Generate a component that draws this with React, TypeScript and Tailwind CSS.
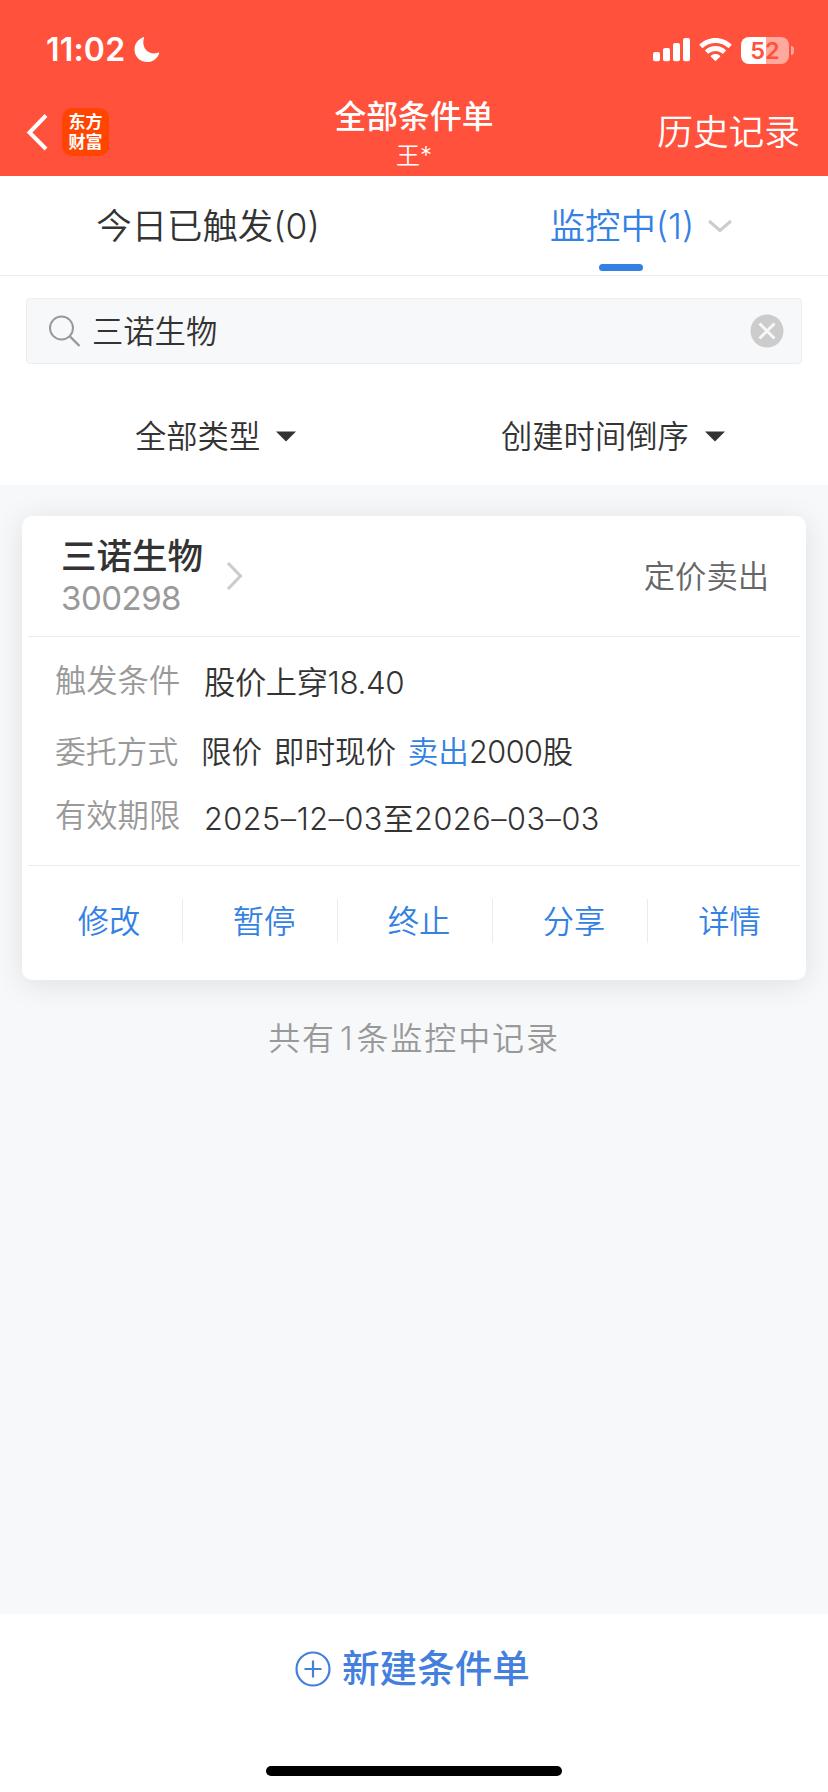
import { useState } from 'react'
import type { ReactNode } from 'react'

interface OrderRow {
  label: string
  value: ReactNode
  labelClass: string
  valueClass: string
}

const rows: OrderRow[] = [
  {
    label: '触发条件',
    value: '股价上穿18.40',
    labelClass: 'w-[149px] text-[31.3px] pb-[5px]',
    valueClass: 'text-[31.3px] tracking-[-0.4px]',
  },
  {
    label: '委托方式',
    value: (
      <>
        限价 即时现价 <span className="text-[#3381e3]">卖出</span>
        <span className="tracking-[-0.5px]">2000</span>股
      </>
    ),
    labelClass: 'w-[146px] text-[30.8px] pt-[1px]',
    valueClass: 'text-[30.6px] [word-spacing:3px] pt-[1px]',
  },
  {
    label: '有效期限',
    value: '2025–12–03至2026–03–03',
    labelClass: 'w-[149px] text-[31.3px] pb-[6px]',
    valueClass: 'text-[30.6px] tracking-[0.55px]',
  },
]

const actions = ['修改', '暂停', '终止', '分享', '详情']

function StatusBar() {
  return (
    <div className="flex h-[88px] items-center justify-between pl-[46px] pr-[34px] pt-[12px]">
      <div className="flex items-center gap-[9px]">
        <span className="text-[32px] leading-[38px] font-semibold tracking-[0.2px]">11:02</span>
        <svg width="26" height="26" viewBox="0 0 26 26" fill="currentColor">
          <path d="M10.2 0.6C9.6 2 9.3 3.6 9.3 5.3C9.3 11.8 13.7 16.4 20.2 16.4C22 16.4 23.6 16.1 24.6 15.6C25 15.4 25.4 15.7 25.2 16.2C23.6 21.5 18.8 25 13 25C6 25 0.5 19.6 0.5 12.5C0.5 7 4 2.2 9.3 0.2C9.9 0 10.4 0.2 10.2 0.6Z" />
        </svg>
      </div>
      <div className="flex items-center">
        <svg width="37" height="24" viewBox="0 0 37 24" fill="currentColor">
          <rect x="0" y="14" width="7" height="9.3" rx="2" />
          <rect x="10" y="10" width="7" height="13.3" rx="2" />
          <rect x="20" y="5" width="7" height="18.3" rx="2" />
          <rect x="30" y="0" width="7" height="23.3" rx="2" />
        </svg>
        <svg className="ml-[9px]" width="33" height="24" viewBox="0 0 33 24" fill="currentColor">
          <path d="M16.5 0C22.6 0 28.2 2.4 32.4 6.3C32.7 6.6 32.7 7 32.4 7.3L30 9.7C29.7 10 29.3 10 29 9.7C25.7 6.6 21.3 4.9 16.5 4.9C11.7 4.9 7.3 6.6 4 9.7C3.7 10 3.3 10 3 9.7L0.6 7.3C0.3 7 0.3 6.6 0.6 6.3C4.8 2.4 10.4 0 16.5 0Z" />
          <path d="M16.5 8.1C20.4 8.1 24 9.6 26.7 12.1C27 12.4 27 12.8 26.7 13.1L24.2 15.5C23.9 15.8 23.6 15.8 23.3 15.5C21.5 13.9 19.1 12.9 16.5 12.9C13.9 12.9 11.5 13.9 9.7 15.5C9.4 15.8 9.1 15.8 8.8 15.5L6.3 13.1C6 12.8 6 12.4 6.3 12.1C9 9.6 12.6 8.1 16.5 8.1Z" />
          <path d="M16.5 16.1C18.3 16.1 19.9 16.7 21.1 17.8C21.4 18.1 21.4 18.4 21.1 18.7L17 22.8C16.7 23.1 16.3 23.1 16 22.8L11.9 18.7C11.6 18.4 11.6 18.1 11.9 17.8C13.1 16.7 14.7 16.1 16.5 16.1Z" />
        </svg>
        <div className="ml-[9px] flex h-[27px] w-[48px] items-center justify-center rounded-[8px] bg-linear-to-r from-white from-52% to-[#ffa89d] to-52% text-[23.5px] leading-[27px] font-semibold text-[#ff513b]">
          52
        </div>
        <div className="ml-[2px] h-[9px] w-[3px] rounded-r-full bg-[#ffa89d]" />
      </div>
    </div>
  )
}

function Header() {
  return (
    <div className="grid h-[88px] grid-cols-[1fr_auto_1fr] items-start">
      <div className="flex items-center pt-[20px] pl-[25px]">
        <svg width="23" height="38" viewBox="0 0 23 38" fill="none" stroke="currentColor" strokeWidth="4">
          <path d="M21 2.5L4.5 19.5L21 36" />
        </svg>
        <div className="ml-[14px] flex h-[48px] w-[47px] flex-col items-center justify-center rounded-[10px] bg-[#ff4500] pb-[1px] text-[17px] leading-[20px] font-bold">
          <span>东方</span>
          <span>财富</span>
        </div>
      </div>
      <div className="flex flex-col items-center pt-[9px]">
        <h1 className="text-[31.8px] leading-[40px] font-medium">全部条件单</h1>
        <p className="pt-[2px] text-[24px] leading-[34px]">王*</p>
      </div>
      <div className="pt-[22px] pr-[28px] text-right text-[35.7px] leading-[44px]">历史记录</div>
    </div>
  )
}

function Caret() {
  return (
    <svg width="20" height="11" viewBox="0 0 20 11" fill="#333333">
      <path d="M0 0.5H20L10 10.5Z" />
    </svg>
  )
}

export default function App() {
  const [keyword, setKeyword] = useState('三诺生物')

  return (
    <div className="flex h-[1792px] w-[828px] flex-col overflow-hidden bg-[#f7f8fa] font-['Inter','Noto_Sans_CJK_SC',sans-serif] font-[350] whitespace-nowrap text-[#333333]">
      <div className="h-[176px] bg-[#ff513b] text-white">
        <StatusBar />
        <Header />
      </div>

      <div className="h-[309px] bg-white">
        <div className="grid h-[100px] grid-cols-2 border-b border-[#ebebeb] text-[35.4px] leading-[44px]">
          <button className="flex justify-center pt-[29px] pl-[2px]">今日已触发(0)</button>
          <button className="relative flex justify-center pt-[29px] pl-[2px] text-[#3381e3]">
            监控中(1)
            <svg className="absolute top-[43px] left-[293px]" width="26" height="15" viewBox="0 0 26 15" fill="none" stroke="#cccccc" strokeWidth="3">
              <path d="M2 2L13 11.5L24 2" />
            </svg>
            <span className="absolute bottom-[4px] left-[185px] h-[7px] w-[44px] rounded-full bg-[#3381e3]" />
          </button>
        </div>

        <div className="px-[26px] pt-[22px]">
          <div className="flex h-[66px] items-center rounded-[4px] border border-[#ebedef] bg-[#f7f8fa] pr-[17px] pl-[22px]">
            <svg width="32" height="32" viewBox="0 0 32 32" fill="none" stroke="#999999" strokeWidth="2">
              <circle cx="12.5" cy="13" r="11.5" />
              <path d="M20.5 21L30.5 31" strokeWidth="2.4" />
            </svg>
            <input
              className="ml-[11px] min-w-0 flex-1 bg-transparent pt-[1px] text-[31.3px] leading-[40px] outline-none"
              value={keyword}
              onChange={(e) => setKeyword(e.target.value)}
            />
            <button onClick={() => setKeyword('')}>
              <svg width="34" height="34" viewBox="0 0 34 34">
                <circle cx="17" cy="17" r="16.5" fill="#cccccc" />
                <path d="M9.5 9.5L24.5 24.5M24.5 9.5L9.5 24.5" stroke="#f7f8fa" strokeWidth="3" />
              </svg>
            </button>
          </div>
        </div>

        <div className="flex pt-[49px] text-[31.3px] leading-[44px]">
          <button className="flex w-[366px] items-center gap-[16px] pl-[135px]">
            <span className="pt-[2px]">全部类型</span>
            <Caret />
          </button>
          <button className="flex items-center gap-[16px] pl-[135px]">
            <span className="pt-[2px]">创建时间倒序</span>
            <Caret />
          </button>
        </div>
      </div>

      <div className="flex-1 px-[22px] pt-[31px]">
        <div className="h-[464px] rounded-[10px] bg-white px-[6px] shadow-[0_4px_30px_rgba(0,0,0,0.1)]">
          <div className="flex h-[121px] items-center border-b border-[#ebebeb] pr-[31px] pl-[33px]">
            <div className="pt-[2px]">
              <h2 className="text-[35.5px] leading-[41px] font-medium">三诺生物</h2>
              <p className="text-[33px] leading-[42px] font-normal tracking-[-0.5px] text-[#999999]">300298</p>
            </div>
            <svg className="ml-[22px]" width="20" height="30" viewBox="0 0 20 30" fill="none" stroke="#cccccc" strokeWidth="3.2">
              <path d="M3 2L15.5 15L3 28" />
            </svg>
            <span className="ml-auto pt-[2px] text-[31.3px] leading-[44px] text-[#666666]">定价卖出</span>
          </div>

          <div className="flex h-[229px] flex-col border-b border-[#ebebeb] pt-[12px] pl-[27px] leading-[44px]">
            {rows.map((row) => (
              <div key={row.label} className="flex h-[68px] items-center">
                <span className={`text-[#999999] ${row.labelClass}`}>{row.label}</span>
                <span className={row.valueClass}>{row.value}</span>
              </div>
            ))}
          </div>

          <div className="flex h-[114px] items-start pt-[33px] text-[31.3px] leading-[46px] text-[#3381e3]">
            {actions.map((action) => (
              <button
                key={action}
                className="h-[44px] w-[155px] shrink-0 border-r border-[#ebebeb] pl-[8px] text-center last:border-r-0"
              >
                {action}
              </button>
            ))}
          </div>
        </div>

        <p className="pt-[37px] text-center text-[32px] leading-[44px] tracking-[1.9px] text-[#999999]">
          共有<span className="ml-[4px] mr-[2px]">1</span>条监控中记录
        </p>
      </div>

      <div className="flex h-[178px] flex-col items-center bg-white">
        <button className="mt-[31px] mr-[3px] flex items-center gap-[11px] text-[37.6px] leading-[48px] font-medium text-[#447fde]">
          <svg width="36" height="36" viewBox="0 0 36 36" fill="none" stroke="currentColor" strokeWidth="2.2">
            <circle cx="18" cy="18" r="16.5" />
            <path d="M9.5 18H26.5M18 9.5V26.5" />
          </svg>
          新建条件单
        </button>
        <div className="mt-[73px] h-[10px] w-[296px] rounded-full bg-black" />
      </div>
    </div>
  )
}
